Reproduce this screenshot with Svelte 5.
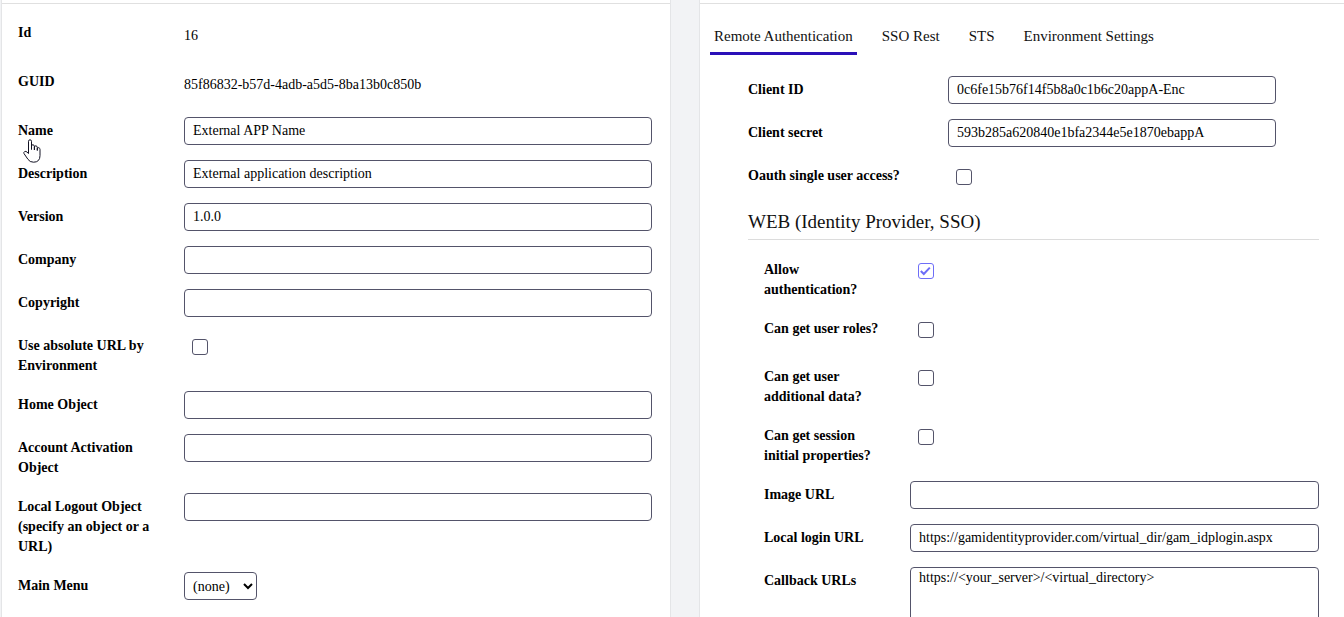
<script lang="ts">
  type Field = {
    id: string;
    label: string;
    type: "static" | "text" | "check" | "select" | "area";
    value?: string;
    checked?: boolean;
  };

  const general: Field[] = [
    { id: "appid", label: "Id", type: "static", value: "16" },
    { id: "guid", label: "GUID", type: "static", value: "85f86832-b57d-4adb-a5d5-8ba13b0c850b" },
    { id: "name", label: "Name", type: "text", value: "External APP Name" },
    { id: "description", label: "Description", type: "text", value: "External application description" },
    { id: "version", label: "Version", type: "text", value: "1.0.0" },
    { id: "company", label: "Company", type: "text", value: "" },
    { id: "copyright", label: "Copyright", type: "text", value: "" },
    { id: "absurl", label: "Use absolute URL by Environment", type: "check" },
    { id: "home", label: "Home Object", type: "text", value: "" },
    { id: "activation", label: "Account Activation Object", type: "text", value: "" },
    { id: "logout", label: "Local Logout Object (specify an object or a URL)", type: "text", value: "" },
    { id: "menu", label: "Main Menu", type: "select", value: "(none)" },
  ];

  const client: Field[] = [
    { id: "clientid", label: "Client ID", type: "text", value: "0c6fe15b76f14f5b8a0c1b6c20appA-Enc" },
    { id: "secret", label: "Client secret", type: "text", value: "593b285a620840e1bfa2344e5e1870ebappA" },
    { id: "single", label: "Oauth single user access?", type: "check" },
  ];

  const web: Field[] = [
    { id: "allow", label: "Allow authentication?", type: "check", checked: true },
    { id: "roles", label: "Can get user roles?", type: "check" },
    { id: "userdata", label: "Can get user additional data?", type: "check" },
    { id: "session", label: "Can get session initial properties?", type: "check" },
    { id: "image", label: "Image URL", type: "text", value: "" },
    { id: "login", label: "Local login URL", type: "text", value: "https://gamidentityprovider.com/virtual_dir/gam_idplogin.aspx" },
    { id: "callback", label: "Callback URLs", type: "area", value: "https://<your_server>/<virtual_directory>" },
  ];

  const tabs = ["Remote Authentication", "SSO Rest", "STS", "Environment Settings"];
  let active = $state("Remote Authentication");
</script>

{#snippet row(f: Field)}
  <div class="row">
    {#if f.type === "static"}
      <span class="label">{f.label}</span>
      <span class="static">{f.value}</span>
    {:else}
      <label class="label" for={f.id}>{f.label}</label>
      {#if f.type === "text"}
        <input class="text" type="text" id={f.id} value={f.value} />
      {:else if f.type === "check"}
        <span class="check">
          <input type="checkbox" id={f.id} checked={f.checked} />
          <svg viewBox="0 0 16 16" aria-hidden="true"><path d="M2.8 8 L5.8 11 L11.8 4.6" /></svg>
        </span>
      {:else if f.type === "select"}
        <select id={f.id}>
          <option>{f.value}</option>
        </select>
      {:else}
        <textarea id={f.id} rows="5" value={f.value}></textarea>
      {/if}
    {/if}
    {#if f.id === "name"}
      <svg class="pointer" viewBox="0 0 18 24" aria-hidden="true">
        <path d="M5.5 14.5 V2.3 Q5.5 .8 7 .8 Q8.5 .8 8.5 2.3 V10.5 V6.8 Q8.8 5.6 10 5.8 Q11.4 6 11.4 7.3 V11 V7.7 Q12 6.6 13 6.9 Q14.3 7.1 14.3 8.4 V11.5 V9.2 Q15.2 8.2 16.2 8.9 Q17 9.3 17 10.4 V16.5 Q17 23.2 10.5 23.2 Q6.8 23.2 5 20.4 L1 14.6 Q.4 13.2 1.7 12.5 Q3 12 4 13.1 Z" />
      </svg>
    {/if}
  </div>
{/snippet}

<main class="page">
  <section class="panel">
    <div class="head"></div>
    <div class="fields general">
      {#each general as f}
        {@render row(f)}
      {/each}
    </div>
  </section>

  <section class="panel last">
    <div class="head"></div>
    <nav class="tabs">
      {#each tabs as tab}
        <button class="tab" class:active={tab === active} onclick={() => (active = tab)}>{tab}</button>
      {/each}
    </nav>
    <div class="auth">
      <div class="fields client">
        {#each client as f}
          {@render row(f)}
        {/each}
      </div>
      <h2>WEB (Identity Provider, SSO)</h2>
      <div class="fields web">
        {#each web as f}
          {@render row(f)}
        {/each}
      </div>
    </div>
  </section>
</main>

<style>
  :global(body) {
    background: #f2f3f5;
  }

  .page {
    display: grid;
    grid-template-columns: 670fr 645fr;
    gap: 28px;
    height: 100vh;
    padding-left: 1px;
    box-sizing: border-box;
    overflow: hidden;
    font-family: "Liberation Serif", "Times New Roman", serif;
    font-size: 14px;
    line-height: 20px;
    color: #000;
  }

  .panel {
    background: #fff;
    border: 1px solid #e4e5e7;
    border-width: 0 1px;
  }

  .panel.last {
    border-right: none;
  }

  .head {
    height: 3px;
    border-bottom: 1px solid #e0e0e0;
  }

  .fields {
    display: flex;
    flex-direction: column;
    gap: 15px;
  }

  .general {
    --label: 166px;
    padding: 15px 18px 15px 16px;
  }

  .client {
    --label: 200px;
    padding-right: 43px;
  }

  .web {
    --label: 146px;
    padding: 16px 0 16px 16px;
  }

  .row {
    display: grid;
    grid-template-columns: var(--label) 1fr;
    align-items: start;
    position: relative;
  }

  .label {
    padding: 4px 15px 0 0;
    font-weight: bold;
  }

  .web .label {
    padding-right: 24px;
  }

  .static {
    padding: 7px 0;
  }

  .text,
  textarea,
  select {
    box-sizing: border-box;
    border: 1px solid #54546a;
    border-radius: 4px;
    background: #fff;
    color: #000;
    font: inherit;
  }

  .text {
    width: 100%;
    height: 28px;
    padding: 0 8px;
  }

  textarea {
    display: block;
    width: 100%;
    padding: 0 8px;
    resize: none;
  }

  select {
    justify-self: start;
    min-width: 73px;
    height: 28px;
    padding: 0 4px;
  }

  .check {
    position: relative;
    height: 26px;
    padding: 7px 0 0 8px;
  }

  .check input {
    appearance: none;
    display: block;
    width: 16px;
    height: 16px;
    margin: 0;
    border: 1px solid #54546a;
    border-radius: 3px;
    background: #fff;
  }

  .check input:checked {
    border-color: #6e6ef7;
  }

  .check svg {
    display: none;
    position: absolute;
    left: 8px;
    top: 7px;
    width: 16px;
    height: 16px;
    fill: none;
    stroke: #6e6ef7;
    stroke-width: 2;
    pointer-events: none;
  }

  .check input:checked + svg {
    display: block;
  }

  .pointer {
    position: absolute;
    left: 5px;
    top: 22px;
    width: 18px;
    height: 24px;
    fill: #fff;
    stroke: #111122;
    stroke-width: 1;
    stroke-linejoin: round;
  }

  .tabs {
    display: flex;
    gap: 21px;
    padding: 14px 10px 0;
  }

  .tab {
    padding: 8px 4px 6px;
    border: none;
    border-bottom: 3px solid transparent;
    background: none;
    color: #111;
    font: inherit;
    font-size: 15px;
    line-height: 20px;
    cursor: pointer;
  }

  .tab.active {
    border-bottom-color: #2a10b8;
  }

  .auth {
    padding: 21px 25px 0 48px;
  }

  h2 {
    margin: 15px 0 0;
    padding-bottom: 5px;
    border-bottom: 1px solid #dcdcdc;
    color: #111;
    font-size: 19px;
    font-weight: normal;
    line-height: 24px;
  }
</style>
